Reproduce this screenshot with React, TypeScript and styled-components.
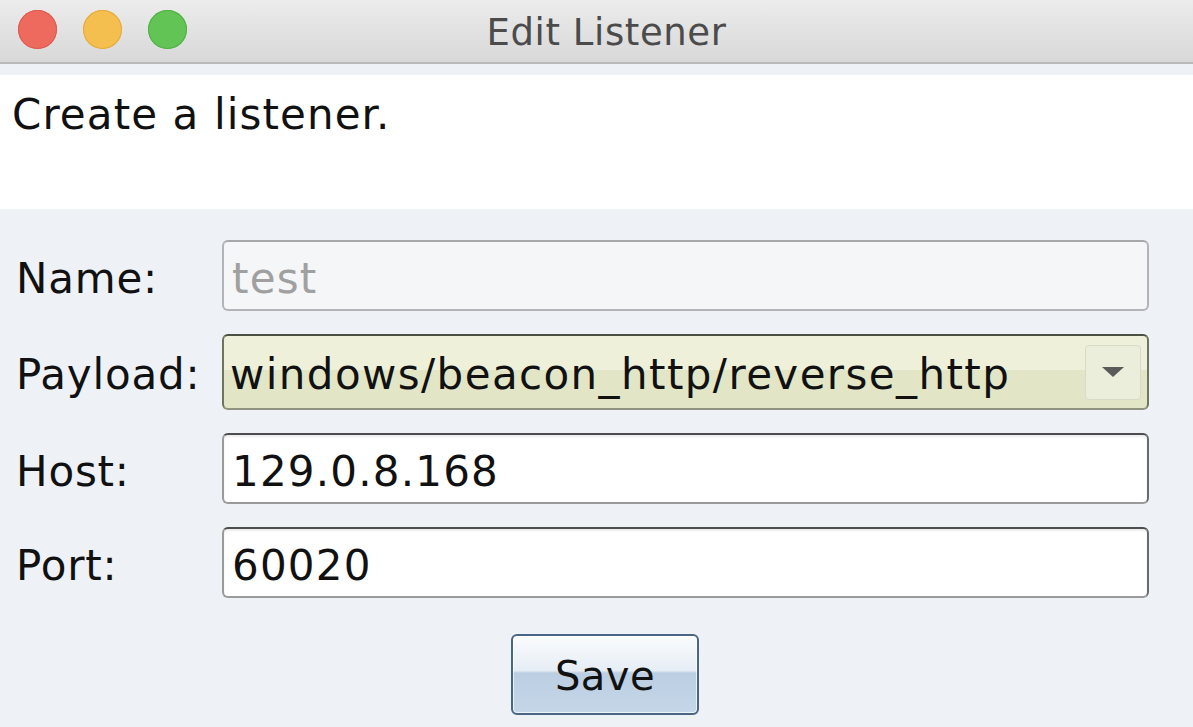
import React from "react";
import styled, { createGlobalStyle } from "styled-components";

const Global = createGlobalStyle`
  html, body { margin: 0; padding: 0; background: #eef1f6; }
  * { box-sizing: border-box; }
`;

const FONT = `"DejaVu Sans", "Noto Sans", sans-serif`;

const Window = styled.div`
  width: 1193px;
  height: 727px;
  background: #eef1f6;
  display: flex;
  flex-direction: column;
  font-family: ${FONT};
  overflow: hidden;
`;

const TitleBar = styled.div`
  position: relative;
  height: 64px;
  flex: none;
  display: flex;
  align-items: center;
  justify-content: center;
  background: linear-gradient(#ececec, #d8d8d8);
  border-bottom: 2px solid #b9b9b9;
`;

const Lights = styled.div`
  position: absolute;
  left: 18px;
  top: 10px;
  display: flex;
  gap: 26px;
`;

const Light = styled.span<{ $c: string; $b: string }>`
  width: 39px;
  height: 39px;
  border-radius: 50%;
  background: ${(p) => p.$c};
  box-shadow: inset 0 0 0 1px ${(p) => p.$b};
`;

const Title = styled.div`
  font-size: 37px;
  letter-spacing: 0.6px;
  color: #4b4b4b;
  margin-left: 20px;
  margin-top: 2px;
`;

const Description = styled.div`
  margin-top: 11px;
  height: 134px;
  background: #ffffff;
  padding: 19px 12px;
  font-size: 42px;
  letter-spacing: 1.1px;
  color: #111;
  line-height: 1;
`;

const Form = styled.div`
  margin-top: 31px;
  padding: 0 44px 0 16px;
  display: grid;
  grid-template-columns: 206px 1fr;
  row-gap: 23px;
  align-items: center;
`;

const Label = styled.div`
  font-size: 42px;
  letter-spacing: 0.8px;
  color: #111;
  padding-top: 5px;
`;

const Field = styled.div<{ $disabled?: boolean }>`
  height: 71px;
  border-radius: 6px;
  display: flex;
  align-items: center;
  padding: 5px 8px 0;
  font-size: 42px;
  letter-spacing: 1.2px;
  background: ${(p) => (p.$disabled ? "#f5f6f8" : "#ffffff")};
  color: ${(p) => (p.$disabled ? "#a0a0a0" : "#111")};
  border: 2px solid ${(p) => (p.$disabled ? "#b4b4b8" : "#9a9a9a")};
  border-top-color: ${(p) => (p.$disabled ? "#a8a8ac" : "#4d4d4d")};
  border-right-color: ${(p) => (p.$disabled ? "#b4b4b8" : "#6a6a6a")};
  box-shadow: ${(p) => (p.$disabled ? "none" : "inset 0 2px 2px rgba(0,0,0,0.08)")};
`;

const Combo = styled.div`
  height: 76px;
  border-radius: 6px;
  display: flex;
  align-items: center;
  padding: 0 6px 0 6px;
  font-size: 42px;
  letter-spacing: 1.4px;
  color: #111;
  background: linear-gradient(#eef0da 0%, #eef0da 47%, #e2e6c6 47%, #e2e6c6 100%);
  border: 2px solid #6e7362;
  border-top-color: #4c5040;
  border-bottom-color: #8f9380;
`;

const ComboText = styled.span`
  flex: 1;
  white-space: nowrap;
  padding-top: 4px;
`;

const ComboButton = styled.div`
  width: 56px;
  height: 55px;
  border-radius: 4px;
  display: flex;
  align-items: center;
  justify-content: center;
  background: #ebeedb;
  border: 1px solid #d8dbc6;
`;

const Footer = styled.div`
  display: flex;
  justify-content: center;
  padding-left: 17px;
  margin-top: 36px;
`;

const Button = styled.button`
  width: 188px;
  height: 81px;
  border-radius: 6px;
  font-family: ${FONT};
  font-size: 40px;
  letter-spacing: 0.5px;
  color: #111;
  border: 2px solid #4b6584;
  background: linear-gradient(#fbfcfe 0%, #e6edf4 45%, #bccee2 48%, #c5d6e8 100%);
  box-shadow: inset 0 0 0 1px rgba(255, 255, 255, 0.7);
  padding: 2px 0 0;
`;

export default function App() {
  return (
    <>
      <Global />
      <Window>
        <TitleBar>
          <Lights>
            <Light $c="#ee6a5f" $b="#de5a4f" />
            <Light $c="#f5bf4f" $b="#e2ab3d" />
            <Light $c="#61c454" $b="#52b045" />
          </Lights>
          <Title>Edit Listener</Title>
        </TitleBar>
        <Description>Create a listener.</Description>
        <Form>
          <Label>Name:</Label>
          <Field $disabled>test</Field>
          <Label>Payload:</Label>
          <Combo>
            <ComboText>windows/beacon_http/reverse_http</ComboText>
            <ComboButton>
              <svg width="22" height="12" viewBox="0 0 22 12">
                <path d="M0 1 H22 L11 11 Z" fill="#5a5a5a" />
              </svg>
            </ComboButton>
          </Combo>
          <Label>Host:</Label>
          <Field>129.0.8.168</Field>
          <Label>Port:</Label>
          <Field>60020</Field>
        </Form>
        <Footer>
          <Button>Save</Button>
        </Footer>
      </Window>
    </>
  );
}
